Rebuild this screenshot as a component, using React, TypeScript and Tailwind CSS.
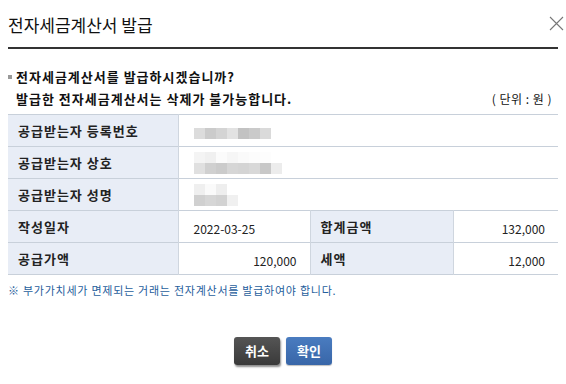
import React from 'react';

const font = { fontFamily: '"Noto Sans CJK KR", "Noto Sans", sans-serif' };

// mosaic block that stands in for the blurred (masked) personal data
const Mosaic: React.FC<{ rows: string[][] }> = ({ rows }) => (
  <div className="flex flex-col">
    {rows.map((r, i) => (
      <div key={i} className="flex h-[11px]">
        {r.map((c, j) => (
          <div key={j} className="w-[11px] h-full" style={{ backgroundColor: c }} />
        ))}
      </div>
    ))}
  </div>
);

const Label: React.FC<{ children: React.ReactNode; className?: string }> = ({ children, className = '' }) => (
  <td className={`bg-[#e8edf6] pl-[10px] text-[13px] font-bold text-[#222] tracking-[1px] border-r border-[#cfd6df] ${className}`}>
    {children}
  </td>
);

const App: React.FC = () => {
  return (
    <div className="w-[566px] h-[384px] bg-white flex flex-col" style={font}>
      <div className="mx-2 h-[49px] flex items-center justify-between border-b-2 border-[#333]">
        <h1 className="text-[17px] text-[#111] pt-[2px]">전자세금계산서 발급</h1>
        <button className="mr-[-8px] w-[20px] h-[20px] flex items-center justify-center">
          <svg width="15" height="15" viewBox="0 0 15 15" fill="none" stroke="#777" strokeWidth="1.1">
            <path d="M1 1 L14 14 M14 1 L1 14" />
          </svg>
        </button>
      </div>

      <div className="mt-[17px] px-2 text-[13px] font-bold text-[#111] leading-[22px] tracking-[1px]">
        <p className="flex items-center">
          <span className="w-[4px] h-[4px] bg-[#999] mr-[4px]" />
          전자세금계산서를 발급하시겠습니까?
        </p>
        <div className="flex justify-between pl-2">
          <span>발급한 전자세금계산서는 삭제가 불가능합니다.</span>
          <span className="font-normal text-[12px] pr-[6px] tracking-[0.5px]">( 단위 : 원 )</span>
        </div>
      </div>

      <table className="mx-2 mt-[4px] w-[550px] border-collapse text-[12px] text-[#222]">
        <colgroup>
          <col className="w-[170px]" />
          <col className="w-[132px]" />
          <col className="w-[143px]" />
          <col className="w-[105px]" />
        </colgroup>
        <tbody>
          <tr className="h-[32px] border-y border-[#c8d0da]">
            <Label>공급받는자 등록번호</Label>
            <td colSpan={3} className="pl-[15px] align-top pt-[13px]">
              <Mosaic rows={[['#dcdcdc', '#cbcbcb', '#d4d4d4', '#e2e2e2', '#c2c2c2', '#cacaca', '#dadada']]} />
            </td>
          </tr>
          <tr className="h-[32px] border-b border-[#c8d0da]">
            <Label>공급받는자 상호</Label>
            <td colSpan={3} className="pl-[15px]">
              <Mosaic
                rows={[
                  ['#f4f4f4', '#f0f0f0', '#fbfbfb', '#f6f6f6', '#fafafa', '#fcfcfc', '#fdfdfd', '#ffffff'],
                  ['#e0e0e0', '#d0d0d0', '#cbcbcb', '#d6d6d6', '#d4d4d4', '#d8d8d8', '#c8c8c8', '#ececec'],
                ]}
              />
            </td>
          </tr>
          <tr className="h-[32px] border-b border-[#c8d0da]">
            <Label>공급받는자 성명</Label>
            <td colSpan={3} className="pl-[15px]">
              <Mosaic
                rows={[
                  ['#efefef', '#fafafa', '#eeeeee', '#ffffff'],
                  ['#d0d0d0', '#d6d6d6', '#d2d2d2', '#f0f0f0'],
                ]}
              />
            </td>
          </tr>
          <tr className="h-[32px] border-b border-[#c8d0da]">
            <Label>작성일자</Label>
            <td className="pl-[15px] pt-[4px] border-r border-[#cfd6df]">2022-03-25</td>
            <Label>합계금액</Label>
            <td className="text-right pr-[13px] pt-[4px]">132,000</td>
          </tr>
          <tr className="h-[32px] border-b border-[#c8d0da]">
            <Label>공급가액</Label>
            <td className="text-right pr-[13px] pt-[4px] border-r border-[#cfd6df]">120,000</td>
            <Label>세액</Label>
            <td className="text-right pr-[13px] pt-[4px]">12,000</td>
          </tr>
        </tbody>
      </table>

      <p className="mx-2 mt-[7px] text-[11px] text-[#1f5e9c] tracking-[0.75px]">
        ※ 부가가치세가 면제되는 거래는 전자계산서를 발급하여야 합니다.
      </p>

      <div className="mt-[38px] flex justify-center gap-[6px]">
        <button className="w-[46px] h-[28px] rounded-[3px] bg-gradient-to-b from-[#555] to-[#3a3a3a] text-white text-[13px] font-bold shadow-[1px_2px_2px_rgba(0,0,0,0.45)]">
          취소
        </button>
        <button className="w-[46px] h-[28px] rounded-[3px] bg-gradient-to-b from-[#4a7cc0] to-[#3866a8] text-white text-[13px] font-bold shadow-[0_1px_1px_rgba(0,0,0,0.25)]">
          확인
        </button>
      </div>
    </div>
  );
};

export default App;
